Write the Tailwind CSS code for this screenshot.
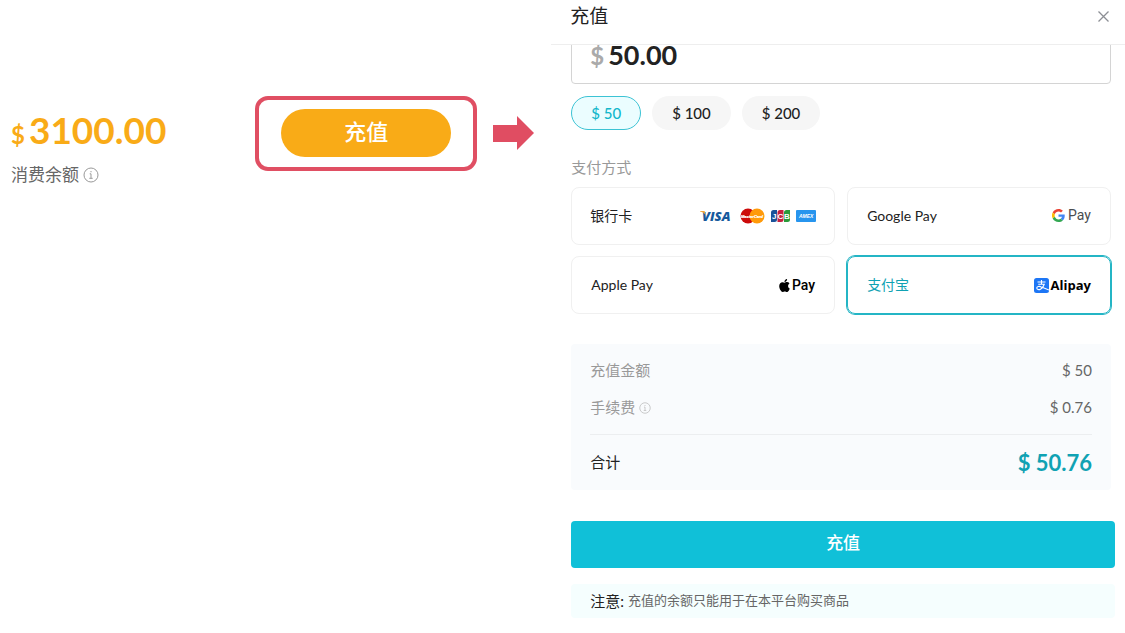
<!DOCTYPE html>
<html lang="zh-CN">
<head>
<meta charset="UTF-8">
<meta name="viewport" content="width=device-width, initial-scale=1">
<title>充值</title>
<script src="https://cdn.jsdelivr.net/npm/@tailwindcss/browser@4"></script>
</head>
<body class="flex min-h-screen bg-white font-[Lato,'Noto_Sans_CJK_SC',sans-serif] text-[#222]">

<!-- Account balance -->
<main class="flex w-[49%] shrink-0 items-start pt-24 pl-[11px] pr-4">
  <section class="flex flex-1 flex-col gap-[6px] pt-[14px]">
    <p class="flex items-baseline gap-1 leading-10 font-bold text-[#f9ab17]">
      <span class="text-2xl leading-10">$</span><span class="text-[37px] leading-10">3100.00</span>
    </p>
    <p class="flex items-center gap-1 text-[17px] leading-7 text-[#666]">
      消费余额
      <svg class="size-4" viewBox="0 0 16 16" fill="none" stroke="#999" aria-hidden="true"><circle cx="8" cy="8" r="7"/><path d="M6.7 6.8H8v4.4M6.3 11.3h3.4M8 4v1.3"/></svg>
    </p>
  </section>
  <div class="rounded-[13px] border-4 border-[#e04f63] px-[22px] pt-[9px] pb-[10px]">
    <button type="button" class="h-12 w-[170px] rounded-full bg-[#f9ab17] pb-1 text-[22px] font-medium text-white">充值</button>
  </div>
  <svg class="mt-5 ml-4 h-[34px] w-[42px]" viewBox="0 0 42 34" fill="#e04d62" aria-hidden="true"><path d="M0 9h24V0l17 17-17 17v-8H0z"/></svg>
</main>

<!-- Top-up dialog -->
<form class="flex min-w-0 flex-1 flex-col">
  <header class="flex h-[45px] items-start justify-between border-b border-[#eee] pl-[19px] pr-[14px]">
    <h1 class="text-[19px] leading-8">充值</h1>
    <button type="button" aria-label="关闭" class="flex h-8 items-center">
      <svg class="size-4" viewBox="0 0 16 16" fill="none" stroke="#8c8f94" stroke-width="1.3"><path d="M3.5 3.5l10 10M13.500 3.500l-10 10"/></svg>
    </button>
  </header>

  <div class="overflow-hidden pl-5 pr-[10px]">
    <div class="mr-1">
      <label class="-mt-[18px] flex h-[57px] items-center gap-1 rounded border border-[#d4d4d4] px-[18px] font-bold">
        <span class="text-2xl text-[#aaa]">$</span>
        <input type="text" value="50.00" aria-label="充值金额" class="min-w-0 flex-1 text-[27px] outline-none">
      </label>

      <div class="mt-3 flex gap-[11px] text-[15px] font-medium">
        <button type="button" aria-pressed="true" class="h-[34px] rounded-full border border-[#3cc3d4] bg-[#ebfdff] px-[19px] text-[#12b7cb]">$ 50</button>
        <button type="button" class="h-[34px] rounded-full bg-[#f6f6f6] px-5">$ 100</button>
        <button type="button" class="h-[34px] rounded-full bg-[#f6f6f6] px-5">$ 200</button>
      </div>

      <fieldset>
        <legend class="pt-[25px] pb-2 text-[15px] leading-6 text-[#999]">支付方式</legend>
        <div class="grid grid-cols-2 gap-x-3 gap-y-[11px] text-sm">
          <label class="relative flex h-[58px] items-center justify-between rounded-lg border border-[#f0f0f0] px-[18px]">
            <input type="radio" name="pay" class="sr-only">银行卡
            <span class="flex items-center gap-[6px]">
              <svg class="h-4 w-[34px]" viewBox="0 0 34 16" role="img" aria-label="Visa"><text x="2" y="13" font-family="Open Sans" font-size="13" font-weight="800" font-style="italic" fill="#16599c">VISA</text><path d="M0 3h4.500l1.500 4.500C4.500 5 2.500 4 0 3.500z" fill="#f0a63a"/></svg>
              <svg class="h-4 w-[25px]" viewBox="0 0 25 16" role="img" aria-label="MasterCard"><circle cx="8" cy="8" r="7.500" fill="#cc0a0a"/><circle cx="17" cy="8" r="7.500" fill="#ff9a0a"/><text x="1" y="9.500" font-family="Liberation Sans" font-size="4" font-weight="700" font-style="italic" fill="#fff" stroke="#fff" stroke-width=".2">MasterCard</text></svg>
              <svg class="h-4 w-[19px]" viewBox="0 0 19 16" role="img" aria-label="JCB"><path d="M2.500 2H6v9.500A2.500 2.500 0 0 1 3.500 14H0V4.500A2.500 2.500 0 0 1 2.500 2z" fill="#1a5299"/><path d="M9 2h3.500v9.500A2.500 2.500 0 0 1 10 14H6.500V4.500A2.500 2.500 0 0 1 9 2z" fill="#c5203f"/><path d="M15.500 2H19v9.500a2.500 2.500 0 0 1-2.500 2.500H13V4.500A2.500 2.500 0 0 1 15.500 2z" fill="#2a9a3a"/><g font-family="Liberation Sans" font-size="8" font-weight="700" fill="#fff"><text x="1" y="11">J</text><text x="6.600" y="11">C</text><text x="13" y="11">B</text></g></svg>
              <svg class="h-4 w-[20px]" viewBox="0 0 20 16" role="img" aria-label="American Express"><rect y="2" width="20" height="12" rx="1" fill="#2795ee"/><text x="3" y="10" font-family="Liberation Sans" font-size="5" font-weight="700" font-style="italic" fill="#fff">AMEX</text></svg>
            </span>
          </label>
          <label class="relative flex h-[58px] items-center justify-between rounded-lg border border-[#f0f0f0] px-[19px]">
            <input type="radio" name="pay" class="sr-only">Google Pay
            <span class="flex items-center gap-[3px] pb-[2px] font-[Roboto,sans-serif] text-sm leading-5 text-[#4a4d50]">
              <svg class="size-[13px]" viewBox="0 0 48 48" aria-hidden="true"><path fill="#EA4335" d="M24 9.500c3.540 0 6.710 1.220 9.210 3.600l6.850-6.850C35.900 2.380 30.470 0 24 0 14.620 0 6.510 5.380 2.560 13.220l7.980 6.190C12.430 13.720 17.740 9.500 24 9.500z"/><path fill="#4285F4" d="M46.980 24.550c0-1.570-.15-3.090-.38-4.550H24v9.020h12.940c-.58 2.960-2.260 5.480-4.780 7.180l7.730 6c4.510-4.180 7.090-10.360 7.090-17.650z"/><path fill="#FBBC05" d="M10.530 28.590a14.500 14.500 0 0 1 0-9.180l-7.980-6.190a24 24 0 0 0 0 21.560l7.980-6.190z"/><path fill="#34A853" d="M24 48c6.480 0 11.930-2.130 15.890-5.810l-7.730-6c-2.150 1.450-4.920 2.300-8.160 2.300-6.260 0-11.570-4.220-13.470-9.910l-7.980 6.190C6.510 42.620 14.620 48 24 48z"/></svg>
              Pay
            </span>
          </label>
          <label class="relative flex h-[58px] items-center justify-between rounded-lg border border-[#f0f0f0] px-[19px]">
            <input type="radio" name="pay" class="sr-only">Apple Pay
            <span class="flex items-center gap-[2px] font-[Roboto,sans-serif] text-sm leading-5 font-medium text-black">
              <svg class="h-[13px] w-[11px]" viewBox="0 0 814 1000" aria-hidden="true"><path d="M788 341c-6 4-108 62-108 190 0 148 130 201 134 202-1 3-21 72-69 142-42 61-87 124-155 124s-85-40-164-40c-76 0-103 41-165 41s-106-57-155-127C46 791 0 663 0 541c0-195 127-298 251-298 66 0 122 43 163 43 40 0 102-46 177-46 29 0 131 3 197 101zM554 159c31-37 54-89 54-140 0-7-1-15-2-20-51 2-111 34-148 76-28 33-55 84-55 136 0 8 1 16 2 18 3 1 8 1 14 1 45 0 103-30 135-71z"/></svg>
              Pay
            </span>
          </label>
          <label class="relative flex h-[58px] items-center justify-between rounded-lg border border-[#24b5c5] px-[19px] text-[#10a2b3] ring-1 ring-[#24b5c5]">
            <input type="radio" name="pay" class="sr-only" checked>支付宝
            <span class="flex items-center gap-[2px] font-['Open_Sans',sans-serif] text-[13px] leading-5 font-bold text-black">
              <svg class="size-[15px]" viewBox="0 0 30 30" aria-hidden="true"><rect width="30" height="30" rx="5" fill="#1d76f5"/><path d="M7 8h16M15 4v8.500M8.500 12.500h12c-1.500 5-4 8-7.500 9.800-3 1.500-7.500 1.200-7.500-2.100s5-4.300 9-2.300c4 1.800 9 4.300 15.500 6" fill="none" stroke="#fff" stroke-width="2.200"/></svg>
              Alipay
            </span>
          </label>
        </div>
      </fieldset>

      <dl class="mt-[30px] rounded bg-[#f9fbfd] px-[19px] pt-2 text-[15px]">
        <div class="flex h-[37px] items-center justify-between"><dt class="text-[#999]">充值金额</dt><dd class="text-[#666]">$ 50</dd></div>
        <div class="flex h-[37px] items-center justify-between">
          <dt class="flex items-center gap-1 text-[#999]">手续费
            <svg class="size-3" viewBox="0 0 16 16" fill="none" stroke="#bbb" aria-hidden="true"><circle cx="8" cy="8" r="7"/><path d="M6.700 6.800H8v4.400M6.300 11.300h3.400M8 4v1.300"/></svg>
          </dt>
          <dd class="text-[#666]">$ 0.76</dd>
        </div>
        <div class="mt-2 flex h-14 items-center justify-between border-t border-[#eceef0]"><dt>合计</dt><dd class="text-[22px] font-bold text-[#10a2b3]">$ 50.76</dd></div>
      </dl>
    </div>

    <button type="submit" class="mt-[31px] h-[47px] w-full rounded bg-[#10c0d8] pb-1 text-[17px] font-medium text-white">充值</button>
    <p class="mt-4 flex h-[34px] items-center gap-1 rounded bg-[#f5fefe] px-[19px] text-[13px] text-[#666]"><span class="text-[15px] text-[#222]">注意:</span>充值的余额只能用于在本平台购买商品</p>
  </div>
</form>
</body>
</html>
